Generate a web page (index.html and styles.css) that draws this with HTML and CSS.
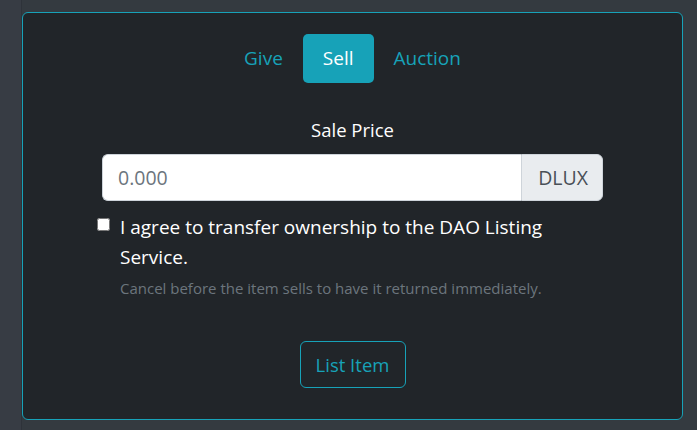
FILE: index.html
```html
<!DOCTYPE html>
<html>
<head>
<meta charset="utf-8">
<link rel="stylesheet" href="styles.css">
</head>
<body>
<div class="side"></div>
<div class="main">
  <div class="card">
    <nav class="tabs">
      <a class="tab">Give</a>
      <a class="tab active">Sell</a>
      <a class="tab">Auction</a>
    </nav>
    <div class="field-label">Sale Price</div>
    <div class="input-group">
      <input class="price" type="text" placeholder="0.000">
      <span class="addon">DLUX</span>
    </div>
    <div class="check">
      <input class="box" type="checkbox">
      <div class="check-text">
        <label class="agree">I agree to transfer ownership to the DAO Listing Service.</label>
        <div class="hint">Cancel before the item sells to have it returned immediately.</div>
      </div>
    </div>
    <div class="actions">
      <button class="btn-list">List Item</button>
    </div>
  </div>
</div>
</body>
</html>
```
FILE: styles.css
```css
html, body {
  margin: 0;
  height: 100%;
}
body {
  background: #343a40;
  display: flex;
  font-family: "Open Sans", "Noto Sans", sans-serif;
  overflow: hidden;
}
.side {
  width: 21px;
  flex: none;
  background: #373c44;
  border-right: 1px solid #2e333a;
}
.main {
  flex: 1;
  padding: 12px 14px 0 0;
  box-sizing: border-box;
}
.card {
  width: 661px;
  height: 408px;
  box-sizing: border-box;
  border: 1px solid #17a2b8;
  border-radius: 6px;
  background: #212529;
  display: flex;
  flex-direction: column;
  align-items: center;
  padding-top: 21px;
}
.tabs {
  display: flex;
  gap: 0;
}
.tab {
  display: block;
  height: 49px;
  line-height: 49px;
  padding: 0 20px;
  font-size: 19px;
  color: #17a2b8;
  border-radius: 5px;
}
.tab.active {
  background: #17a2b8;
  color: #fff;
}
.field-label {
  margin-top: 35px;
  font-size: 18.5px;
  color: #fff;
  line-height: 24px;
}
.input-group {
  margin-top: 12px;
  display: flex;
  width: 501px;
  height: 47px;
}
.price {
  flex: 1;
  min-width: 0;
  margin: 0;
  border: 1px solid #ced4da;
  border-right: none;
  border-radius: 6px 0 0 6px;
  background: #fff;
  padding: 0 15px;
  font-family: inherit;
  font-size: 19.5px;
  color: #495057;
  outline: none;
}
.price::placeholder {
  color: #6c757d;
}
.addon {
  display: flex;
  align-items: center;
  padding: 0 14px 0 16px;
  background: #e9ecef;
  border: 1px solid #ced4da;
  border-radius: 0 6px 6px 0;
  font-size: 19.5px;
  color: #495057;
}
.check {
  align-self: flex-start;
  margin-left: 74px;
  margin-top: 11px;
  display: flex;
  gap: 10px;
  width: 470px;
}
.box {
  width: 13px;
  height: 13px;
  margin: 6px 0 0 0;
  flex: none;
}
.agree {
  display: block;
  font-size: 19px;
  line-height: 30px;
  color: #fff;
}
.hint {
  margin-top: 6px;
  font-size: 15px;
  line-height: 20px;
  color: #6c757d;
}
.actions {
  margin-top: 43px;
}
.btn-list {
  width: 106px;
  height: 47px;
  background: transparent;
  border: 1px solid #17a2b8;
  border-radius: 6px;
  color: #17a2b8;
  font-family: inherit;
  font-size: 18.5px;
  padding: 0;
}
```
